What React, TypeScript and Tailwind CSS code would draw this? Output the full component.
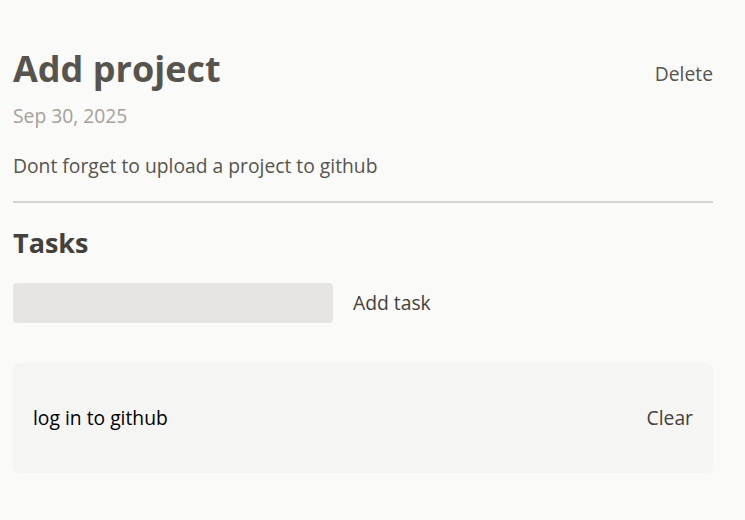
export default function App() {
  return (
    <div className="min-h-screen bg-[#fafaf9] font-['Open_Sans',sans-serif] text-[19.3px]">
      <div className="w-[700px] ml-[13px] pt-[46px]">
        <header className="pb-[20px] mb-[20px] border-b-2 border-stone-300">
          <div className="flex items-center justify-between">
            <h1 className="text-[36px] leading-[45px] font-bold text-stone-600 mb-[10px]">Add project</h1>
            <button className="text-stone-600 leading-[30px]">Delete</button>
          </div>
          <p className="mb-[20px] leading-[30px] text-stone-400">Sep 30, 2025</p>
          <p className="text-stone-600 leading-[30px] whitespace-pre-wrap">Dont forget to upload a project to github</p>
        </header>
        <section>
          <h2 className="text-[27px] leading-[40px] font-bold text-stone-700 mb-[20px]">Tasks</h2>
          <div className="flex items-center gap-[20px]">
            <input className="w-[320px] h-[40px] px-[10px] py-[5px] rounded-sm bg-stone-200 outline-none" />
            <button className="text-stone-700 leading-[30px]">Add task</button>
          </div>
          <ul className="p-[20px] mt-[40px] rounded-md bg-stone-100">
            <li className="flex justify-between my-[20px] leading-[30px]">
              <span className="text-black">log in to github</span>
              <button className="text-stone-700">Clear</button>
            </li>
          </ul>
        </section>
      </div>
    </div>
  );
}
